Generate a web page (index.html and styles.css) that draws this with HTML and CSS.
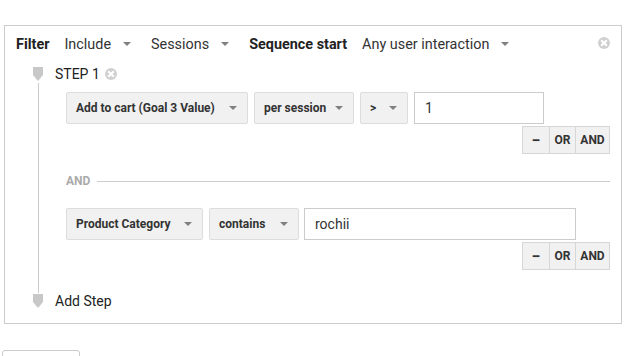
FILE: index.html
```html
<!DOCTYPE html>
<html lang="en">
<head>
    <meta charset="UTF-8">
    <title>Sequence Filter</title>
    <link rel="stylesheet" href="styles.css">
</head>
<body>
<div class="panel">
    <div class="header">
        <span class="label-bold">Filter</span>
        <span class="menu">Include <i class="caret"></i></span>
        <span class="menu">Sessions <i class="caret"></i></span>
        <span class="label-bold seq">Sequence start</span>
        <span class="menu">Any user interaction <i class="caret"></i></span>
        <span class="close close-main"></span>
    </div>

    <div class="flow">
        <div class="step-head">
            <svg class="marker" width="10" height="15" viewBox="0 0 10 15"><path d="M0 0H10V8L5 14L0 8Z" fill="#c8c8c8"/></svg>
            <span class="step-title">STEP 1</span>
            <span class="close"></span>
        </div>

        <div class="step-body">
            <div class="cond-row">
                <div class="select w-goal">Add to cart (Goal 3 Value) <i class="caret"></i></div>
                <div class="select w-per">per session <i class="caret"></i></div>
                <div class="select w-op">&gt; <i class="caret"></i></div>
                <div class="text-input w-val">1</div>
            </div>
            <div class="btn-row">
                <div class="btn-group">
                    <button class="btn btn-minus">&minus;</button>
                    <button class="btn btn-or">OR</button>
                    <button class="btn btn-and">AND</button>
                </div>
            </div>

            <div class="and-divider">
                <span>AND</span>
            </div>

            <div class="cond-row">
                <div class="select w-cat">Product Category <i class="caret"></i></div>
                <div class="select w-contains">contains <i class="caret"></i></div>
                <div class="text-input w-text">rochii</div>
            </div>
            <div class="btn-row">
                <div class="btn-group">
                    <button class="btn btn-minus">&minus;</button>
                    <button class="btn btn-or">OR</button>
                    <button class="btn btn-and">AND</button>
                </div>
            </div>
        </div>

        <div class="step-head add-step">
            <svg class="marker" width="10" height="15" viewBox="0 0 10 15"><path d="M0 0H10V8L5 14L0 8Z" fill="#c8c8c8"/></svg>
            <span class="step-title">Add Step</span>
        </div>
    </div>
</div>

<div class="bottom-btn"></div>
</body>
</html>
```

FILE: styles.css
```css
body {
    margin: 0;
    font-family: Roboto, "Liberation Sans", Arial, sans-serif;
    color: #222;
    background-color: #fff;
}

.panel {
    margin: 25px 0 0 4px;
    width: 616px;
    height: 297px;
    border: 1px solid #ccc;
    box-sizing: content-box;
}

.header {
    display: flex;
    align-items: center;
    height: 20px;
    padding: 8px 0 0 11px;
    font-size: 14.4px;
    position: relative;
}

.label-bold {
    font-weight: bold;
    color: #222;
    margin-right: 15px;
}

.seq {
    margin-right: 15px;
}

.menu {
    display: inline-flex;
    align-items: center;
    color: #333;
    margin-right: 20px;
}

.caret {
    display: inline-block;
    width: 0;
    height: 0;
    border-left: 4px solid transparent;
    border-right: 4px solid transparent;
    border-top: 4px solid #808080;
    margin-left: 12px;
}

.close {
    display: inline-block;
    width: 12px;
    height: 12px;
    border-radius: 50%;
    background-color: #d0d0d0;
    position: relative;
}

.close::before,
.close::after {
    content: "";
    position: absolute;
    left: 2px;
    top: 5px;
    width: 8px;
    height: 2px;
    background-color: #fff;
    transform: rotate(45deg);
}

.close::after {
    transform: rotate(-45deg);
}

.close-main {
    position: absolute;
    left: 593px;
    top: 11px;
}

.flow {
    margin: 11px 0 0 28px;
}

.step-head {
    display: flex;
    align-items: center;
    height: 18px;
}

.marker {
    display: block;
    margin-right: 12px;
}

.step-title {
    font-size: 14px;
    color: #222;
    margin-right: 5px;
}

.step-body {
    margin-left: 5px;
    border-left: 1px solid #ccc;
    padding: 9px 0 23px 27px;
    width: 544px;
}

.cond-row {
    display: flex;
    gap: 6px;
    height: 32px;
}

.select {
    box-sizing: border-box;
    height: 32px;
    display: flex;
    align-items: center;
    justify-content: space-between;
    padding: 0 10px 0 9px;
    background-color: #f1f1f1;
    border: 1px solid #dcdcdc;
    border-radius: 2px;
    font-size: 12px;
    font-weight: bold;
    color: #333;
}

.select .caret {
    margin-left: 0;
}

.text-input {
    box-sizing: border-box;
    height: 32px;
    display: flex;
    align-items: center;
    padding-left: 10px;
    border: 1px solid #ccc;
    font-size: 14px;
    color: #333;
    background-color: #fff;
}

.w-goal { width: 182px; }
.w-per { width: 100px; }
.w-op { width: 48px; }
.w-val { width: 130px; }
.w-cat { width: 137px; }
.w-contains { width: 90px; }
.w-text { width: 272px; margin-left: -1px; }

.btn-row {
    display: flex;
    justify-content: flex-end;
    margin-top: 2px;
}

.btn-group {
    display: flex;
}

.btn {
    box-sizing: border-box;
    height: 28px;
    padding: 0;
    margin: 0 0 0 -1px;
    background-color: #f1f1f1;
    border: 1px solid #d6d6d6;
    font-family: Roboto, "Liberation Sans", Arial, sans-serif;
    font-size: 12px;
    font-weight: bold;
    color: #333;
    cursor: pointer;
}

.btn-minus {
    width: 28px;
    font-size: 16px;
}

.btn-or {
    width: 27px;
}

.btn-and {
    width: 35px;
}

.and-divider {
    display: flex;
    align-items: center;
    margin: 20px 0 20px 0;
    height: 14px;
    font-size: 12px;
    font-weight: bold;
    color: #aaa;
}

.and-divider::after {
    content: "";
    flex: 1;
    height: 1px;
    background-color: #ccc;
    margin-left: 7px;
}

.add-step {
    height: 16px;
}

.bottom-btn {
    margin: 26px 0 0 2px;
    width: 76px;
    height: 20px;
    border: 1px solid #ccc;
    border-radius: 3px;
}
```
